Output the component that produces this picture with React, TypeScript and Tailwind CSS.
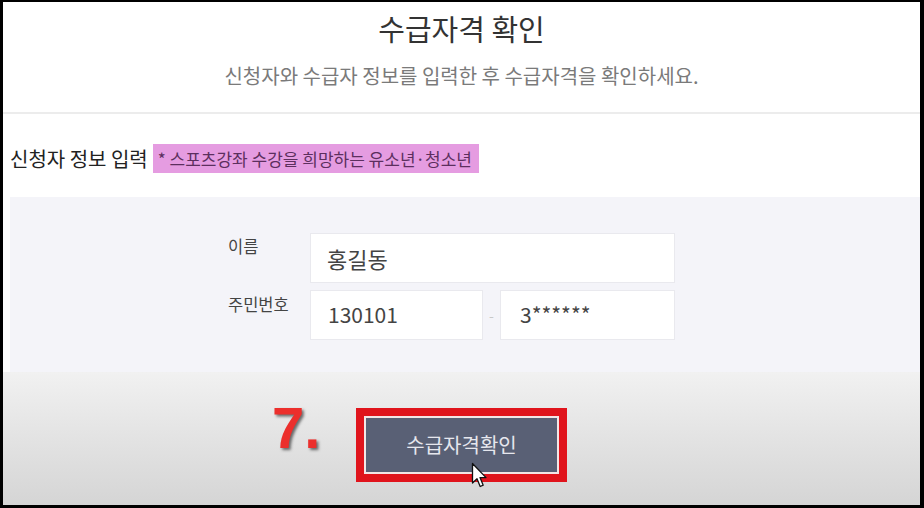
import React from "react";

const font = { fontFamily: '"Noto Sans CJK KR", "Noto Sans", sans-serif' };

function Cursor() {
  return (
    <svg
      className="absolute left-[471px] top-[462px]"
      width="17"
      height="27"
      viewBox="0 0 17 27"
    >
      <path
        d="M1.5 1.5 L1.5 21 L6 16.8 L9.2 24.5 L12.2 23.2 L9 15.6 L15 15.6 Z"
        fill="#ffffff"
        stroke="#111111"
        strokeWidth="1.3"
        strokeLinejoin="round"
      />
    </svg>
  );
}

export default function App() {
  return (
    <div
      className="relative w-[924px] h-[508px] bg-black pt-[2px] pl-[3px] pr-[4px] pb-[3px]"
      style={font}
    >
      <div className="flex flex-col h-full bg-white">
        <h1 className="pt-[6px] text-center text-[29px] leading-[40px] text-[#333333]">
          수급자격 확인
        </h1>
        <p className="mt-[16px] text-center text-[20px] leading-[24px] text-[#7a7a7a]">
          신청자와 수급자 정보를 입력한 후 수급자격을 확인하세요.
        </p>
        <div className="mt-[24px] h-[2px] bg-[#ececec]" />

        <div className="mt-[30px] pl-[7px] flex items-center gap-[5px]">
          <h2 className="text-[20px] leading-[29px] text-[#222222]">
            신청자 정보 입력
          </h2>
          <span className="h-[29px] bg-[#e59ce1] pl-[5px] pr-[7px] text-[17px] leading-[29px] text-[#5c2f5e]">
            * 스포츠강좌 수강을 희망하는 유소년·청소년
          </span>
        </div>

        <div className="mt-[24px] ml-[7px] bg-[#f4f4f9] pt-[36px] pb-[32px] pl-[218px] flex flex-col gap-[7px]">
          <div className="flex">
            <label className="w-[82px] pt-[3px] text-[16.5px] leading-[20px] text-[#444444]">
              이름
            </label>
            <div className="w-[365px] h-[50px] bg-white border border-[#e9e9ee] pl-[16px] flex items-center text-[22px] text-[#444444]">
              홍길동
            </div>
          </div>
          <div className="flex">
            <label className="w-[82px] pt-[4px] text-[16.5px] leading-[20px] text-[#444444]">
              주민번호
            </label>
            <div className="w-[173px] h-[50px] bg-white border border-[#e9e9ee] pl-[17px] flex items-center text-[21px] text-[#444444]">
              130101
            </div>
            <div className="w-[17px] flex items-center justify-center text-[14px] text-[#c8c8c8]">
              -
            </div>
            <div className="w-[175px] h-[50px] bg-white border border-[#e9e9ee] pl-[19px] flex items-center text-[21px] text-[#444444]">
              3******
            </div>
          </div>
        </div>

        <div className="flex-1 bg-gradient-to-b from-[#f1f1f1] to-[#d5d5d5] pt-[36px] flex justify-center">
          <div className="h-[74px] w-[211px] border-[8px] border-[#e0141c] bg-[#f3e6e6] p-[2px]">
            <button className="w-full h-full bg-[#596075] text-[20px] text-[#e6e7ee]">
              수급자격확인
            </button>
          </div>
        </div>
      </div>

      <span
        className="absolute left-[272px] top-[399px] text-[58px] leading-[58px] font-bold text-[#ec2f2c] [text-shadow:2px_2px_3px_rgba(0,0,0,0.55)]"
        style={{ fontFamily: '"Liberation Sans", Arial, sans-serif' }}
      >
        7.
      </span>
      <Cursor />
    </div>
  );
}
